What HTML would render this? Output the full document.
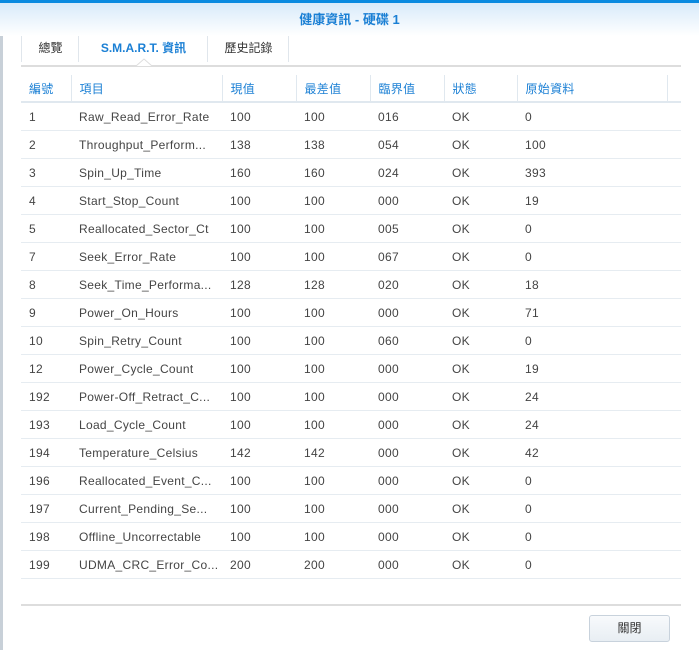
<!DOCTYPE html>
<html><head><meta charset="utf-8"><style>
body{margin:0;width:699px;height:650px;overflow:hidden;background:#fff;font-family:"Liberation Sans","Noto Sans CJK TC",sans-serif;position:relative}
.top{position:absolute;left:0;top:0;width:699px;height:3px;background:#0a8ae0}
.title{position:absolute;left:0;top:3px;width:699px;height:33px;background:linear-gradient(#d8eafa,#fff);text-align:center;line-height:33px;font-size:13px;font-weight:bold;color:#1a7fd4}
.left{position:absolute;left:0;top:36px;width:3px;height:614px;background:#c8d0d8}
.tabs{position:absolute;left:21px;top:36px;height:30px;font-size:12px}
.tab{position:absolute;top:0;height:26px;line-height:24px;text-align:center;color:#333;border-left:1px solid #e0e6ec}
.sep{position:absolute;left:21px;top:65px;width:660px;height:2px;background:#ddd}
table{position:absolute;left:21px;top:75px;border-collapse:collapse;font-size:12px;color:#444;letter-spacing:0.3px}
td{height:27px;padding:0 0 0 8px;border-bottom:1px solid #e6ecf1;white-space:nowrap;overflow:hidden}
tr.h td{color:#1a7fd4;border-right:1px solid #e0e8ef;height:26px;border-bottom:2px solid #e0e8ef}
.bsep{position:absolute;left:21px;top:604px;width:660px;height:2px;background:#ddd}
.btn{position:absolute;left:589px;top:615px;width:81px;height:27px;border:1px solid #c8d2dc;border-radius:3px;background:linear-gradient(#f8fafc,#e8eef3);text-align:center;line-height:25px;font-size:12px;color:#333;box-sizing:border-box}
</style></head><body>
<div class="top"></div><div class="left"></div>
<div class="title">健康資訊 - 硬碟 1</div>
<div class="tabs">
<div class="tab" style="left:0;width:57px">總覽</div>
<div class="tab" style="left:57px;width:129px;color:#1a7fd4;font-weight:bold">S.M.A.R.T. 資訊</div>
<div class="tab" style="left:186px;width:81px">歷史記錄</div>
<div class="tab" style="left:267px;width:1px"></div>
</div>
<div class="sep"></div>
<svg style="position:absolute;left:136px;top:58px" width="16" height="9"><path d="M0 8 L8 1 L16 8" fill="#fff" stroke="#ddd"/></svg>
<table>
<colgroup><col style="width:50px"><col style="width:151px"><col style="width:74px"><col style="width:74px"><col style="width:74px"><col style="width:73px"><col style="width:150px"><col style="width:14px"></colgroup>
<tr class="h"><td>編號</td><td>項目</td><td>現值</td><td>最差值</td><td>臨界值</td><td>狀態</td><td>原始資料</td><td style="border-right:none"></td></tr>
<tr><td>1</td><td>Raw_Read_Error_Rate</td><td>100</td><td>100</td><td>016</td><td>OK</td><td>0</td><td></td></tr>
<tr><td>2</td><td>Throughput_Perform...</td><td>138</td><td>138</td><td>054</td><td>OK</td><td>100</td><td></td></tr>
<tr><td>3</td><td>Spin_Up_Time</td><td>160</td><td>160</td><td>024</td><td>OK</td><td>393</td><td></td></tr>
<tr><td>4</td><td>Start_Stop_Count</td><td>100</td><td>100</td><td>000</td><td>OK</td><td>19</td><td></td></tr>
<tr><td>5</td><td>Reallocated_Sector_Ct</td><td>100</td><td>100</td><td>005</td><td>OK</td><td>0</td><td></td></tr>
<tr><td>7</td><td>Seek_Error_Rate</td><td>100</td><td>100</td><td>067</td><td>OK</td><td>0</td><td></td></tr>
<tr><td>8</td><td>Seek_Time_Performa...</td><td>128</td><td>128</td><td>020</td><td>OK</td><td>18</td><td></td></tr>
<tr><td>9</td><td>Power_On_Hours</td><td>100</td><td>100</td><td>000</td><td>OK</td><td>71</td><td></td></tr>
<tr><td>10</td><td>Spin_Retry_Count</td><td>100</td><td>100</td><td>060</td><td>OK</td><td>0</td><td></td></tr>
<tr><td>12</td><td>Power_Cycle_Count</td><td>100</td><td>100</td><td>000</td><td>OK</td><td>19</td><td></td></tr>
<tr><td>192</td><td>Power-Off_Retract_C...</td><td>100</td><td>100</td><td>000</td><td>OK</td><td>24</td><td></td></tr>
<tr><td>193</td><td>Load_Cycle_Count</td><td>100</td><td>100</td><td>000</td><td>OK</td><td>24</td><td></td></tr>
<tr><td>194</td><td>Temperature_Celsius</td><td>142</td><td>142</td><td>000</td><td>OK</td><td>42</td><td></td></tr>
<tr><td>196</td><td>Reallocated_Event_C...</td><td>100</td><td>100</td><td>000</td><td>OK</td><td>0</td><td></td></tr>
<tr><td>197</td><td>Current_Pending_Se...</td><td>100</td><td>100</td><td>000</td><td>OK</td><td>0</td><td></td></tr>
<tr><td>198</td><td>Offline_Uncorrectable</td><td>100</td><td>100</td><td>000</td><td>OK</td><td>0</td><td></td></tr>
<tr><td>199</td><td>UDMA_CRC_Error_Co...</td><td>200</td><td>200</td><td>000</td><td>OK</td><td>0</td><td></td></tr>
</table>
<div class="bsep"></div>
<div class="btn">關閉</div>
</body></html>
